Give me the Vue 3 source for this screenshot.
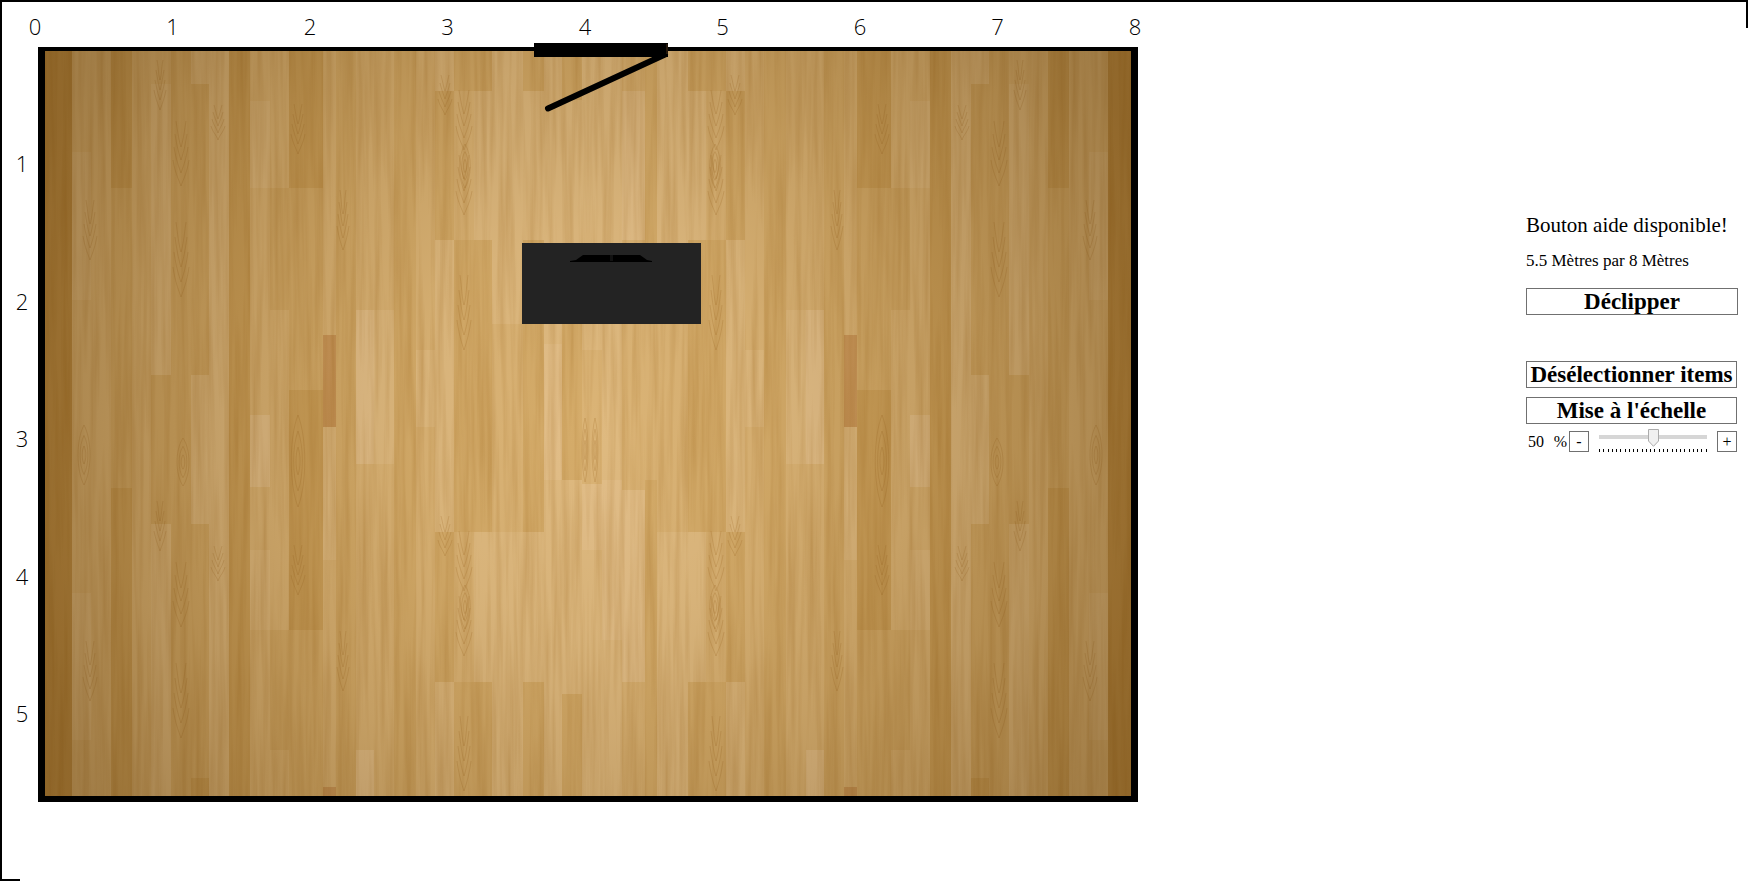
<script setup>
import { ref } from 'vue'

const scale = ref(50)
const metresX = [0, 1, 2, 3, 4, 5, 6, 7, 8]
const metresY = [1, 2, 3, 4, 5]
const ticks = Array.from({ length: 26 }, (_, i) => i)

const TOP = 47
const BOTTOM = 802
const PERIOD = 441

const tone = { l: '#dfba80', h: '#e2be88', m: '#dbb476', d: '#d5ac6a', e: '#cda15b', r: '#ca975a' }

// Each board: left edge, right edge, base tone, then inserts [top, bottom, tone].
const sideBoards = [
  [45, 72, 'e'],
  [72, 91, 'm', [152, 300, 'l'], [593, 740, 'l']],
  [91, 111, 'm'],
  [111, 132, 'e', [188, 488, 'd']],
  [132, 151, 'm'],
  [151, 171, 'm', [84, 375, 'l'], [375, 524, 'd'], [524, 796, 'l']],
  [171, 191, 'd'],
  [191, 209, 'l', [84, 375, 'd'], [524, 778, 'd'], [778, 796, 'e']],
  [209, 229, 'l'],
  [229, 250, 'e'],
  [250, 270, 'm', [101, 188, 'l'], [415, 487, 'h'], [550, 630, 'l']],
  [270, 289, 'm', [188, 310, 'd'], [630, 750, 'd']],
  [289, 323, 'd', [51, 188, 'e'], [390, 630, 'e']],
  [323, 336, 'm', [335, 427, 'r'], [427, 560, 'l'], [787, 796, 'r']],
  [336, 356, 'd'],
  [356, 374, 'm', [310, 464, 'h'], [750, 796, 'h']],
  [374, 394, 'm', [310, 464, 'l']],
  [394, 416, 'd'],
  [416, 435, 'm', [350, 427, 'l'], [427, 532, 'm']],
  [435, 454, 'l', [91, 240, 'd'], [532, 682, 'd']],
  [454, 474, 'd', [91, 240, 'm'], [532, 682, 'm']],
  [474, 492, 'd', [91, 240, 'l'], [532, 682, 'l']],
  [492, 523, 'l', [324, 532, 'm']]
]
const centreBoards = [
  [523, 544, 'd', [91, 240, 'l'], [532, 682, 'l']],
  [544, 562, 'l', [344, 480, 'h']],
  [562, 582, 'd', [100, 243, 'l'], [480, 694, 'l']],
  [582, 602, 'l', [350, 484, 'm'], [484, 550, 'h']],
  [602, 622, 'l', [480, 640, 'h']],
  [622, 645, 'm', [91, 240, 'h'], [490, 682, 'h']],
  [645, 657, 'd', [324, 480, 'm']]
]

function pieces(board, flip) {
  const [a, b, base, ...inserts] = board
  const x = flip ? 1180 - b : a
  return [[TOP, BOTTOM, base], ...inserts].map(([y1, y2, t]) => ({
    x, y: y1, w: b - a, h: y2 - y1, fill: tone[t]
  }))
}
const boards = [
  ...sideBoards.flatMap(b => pieces(b, false)),
  ...centreBoards.flatMap(b => pieces(b, false)),
  ...sideBoards.flatMap(b => pieces(b, true))
]

// Pointed growth rings: centre x, tip y, half width, height of each nest.
const archSeeds = [
  [181, 186, 8, 26], [181, 297, 8, 30], [464, 150, 8, 24], [464, 215, 8, 24],
  [298, 154, 7, 20], [464, 350, 7, 30], [218, 140, 7, 14], [90, 260, 7, 24],
  [445, 115, 7, 16], [343, 250, 6, 24], [160, 110, 6, 20]
]
function arch([x, y, w, h]) {
  return [0, 1, 2, 3].map(i => {
    const t = y - i * h / 2
    const s = w - i
    return `M${x - s} ${t - h} C${x - s + 2} ${t - h / 2} ${x - 2} ${t - 6} ${x} ${t} C${x + 2} ${t - 6} ${x + s - 2} ${t - h / 2} ${x + s} ${t - h}`
  }).join(' ')
}
const ringSeeds = [[298, 461, 9, 46], [183, 462, 8, 24], [465, 166, 7, 22], [465, 607, 7, 22], [84, 455, 8, 30], [595, 450, 4, 32]]
function ring([x, y, w, h]) {
  return [1, 0.65, 0.3].map(k => {
    const a = w * k
    const b = h * k
    return `M${x} ${y - b} C${x + a} ${y - b / 2} ${x + a} ${y + b / 2} ${x} ${y + b} C${x - a} ${y + b / 2} ${x - a} ${y - b / 2} ${x} ${y - b}`
  }).join(' ')
}
const archPath = archSeeds.flatMap(s => [s, [s[0], s[1] + PERIOD, s[2], s[3]]]).map(arch).join(' ')
const ringPath = ringSeeds.map(ring).join(' ')

function step(delta) {
  scale.value = Math.min(100, Math.max(0, Number(scale.value) + delta))
}
</script>

<template>
  <main class="page">
    <section class="plan" aria-label="Plan de la pièce">
      <div class="axis-x">
        <span v-for="n in metresX" :key="n" class="mark">{{ n }}</span>
      </div>
      <div class="axis-y">
        <span v-for="n in metresY" :key="n" class="mark">{{ n }}</span>
      </div>
      <svg class="room" viewBox="38 47 1100 755" role="img" aria-label="Pièce avec porte et bureau">
        <defs>
          <filter id="grain" x="0" y="0" width="100%" height="100%" color-interpolation-filters="sRGB">
            <feTurbulence type="fractalNoise" baseFrequency="0.16 0.006" numOctaves="3" seed="7" />
            <feColorMatrix values="0 0 0 0 0.6  0 0 0 0 0.38  0 0 0 0 0.08  0.45 0 0 0 -0.16" />
          </filter>
          <radialGradient id="shade" gradientUnits="userSpaceOnUse" cx="590" cy="425" r="600" gradientTransform="translate(0 -40) scale(1 1.1)">
            <stop offset="0" stop-color="#4c2c00" stop-opacity="0" />
            <stop offset="0.3" stop-color="#4c2c00" stop-opacity="0.05" />
            <stop offset="0.55" stop-color="#4c2c00" stop-opacity="0.15" />
            <stop offset="0.8" stop-color="#4c2c00" stop-opacity="0.28" />
            <stop offset="1" stop-color="#4c2c00" stop-opacity="0.4" />
          </radialGradient>
        </defs>
        <rect v-for="(b, i) in boards" :key="i" :x="b.x" :y="b.y" :width="b.w" :height="b.h" :fill="b.fill" />
        <g fill="none" stroke="#9c6620" stroke-opacity="0.22">
          <path :d="archPath" />
          <path :d="ringPath" />
          <g transform="translate(1180 0) scale(-1 1)">
            <path :d="archPath" />
            <path :d="ringPath" />
          </g>
        </g>
        <rect x="38" y="47" width="550" height="755" filter="url(#grain)" />
        <g transform="translate(1176 0) scale(-1 1)">
          <rect x="38" y="47" width="550" height="755" filter="url(#grain)" />
        </g>
        <rect x="45" y="51" width="27" height="745" fill="#8a5200" fill-opacity="0.2" />
        <rect x="1108" y="51" width="23" height="745" fill="#8a5200" fill-opacity="0.2" />
        <rect x="38" y="47" width="1100" height="755" fill="url(#shade)" />
        <path d="M38 47H1138V802H38ZM45 51V796H1131V51Z" fill="#000" fill-rule="evenodd" />
        <rect x="534" y="43" width="134" height="14" fill="#000" />
        <path d="M548 108.500L665 54.500" stroke="#000" stroke-width="6" stroke-linecap="round" />
        <path d="M667 44V54" stroke="#4a3018" />
        <rect x="522" y="243" width="179" height="81" fill="#232323" />
        <path d="M570 262V261L576 260L583 255H640L647 260L652 261V262Z" fill="#000" />
        <rect x="610" y="255" width="3" height="6" fill="#111" />
      </svg>
    </section>

    <aside class="tools">
      <p class="help">Bouton aide disponible!</p>
      <p class="size">5.5 Mètres par 8 Mètres</p>
      <button type="button" class="wide clip">Déclipper</button>
      <button type="button" class="wide">Désélectionner items</button>
      <button type="button" class="wide">Mise à l'échelle</button>
      <div class="zoom">
        <label class="percent" for="scale"><span>{{ scale }}</span><span>%</span></label>
        <button type="button" class="small" aria-label="Réduire" @click="step(-4)">-</button>
        <div class="slider">
          <input id="scale" v-model="scale" type="range" min="0" max="100">
          <div class="ticks"><i v-for="t in ticks" :key="t"></i></div>
        </div>
        <button type="button" class="small" aria-label="Agrandir" @click="step(4)">+</button>
      </div>
    </aside>
  </main>
</template>

<style>
body { background: #fff; }
</style>

<style scoped>
.page {
  position: relative;
  box-sizing: border-box;
  min-height: 100vh;
  border-top: 2px solid #000;
  border-left: 2px solid #000;
  display: flex;
  justify-content: space-between;
  align-items: flex-start;
  gap: 32px;
  padding-right: 10px;
  color: #000;
  font-family: "Liberation Serif", serif;
}
.page::before,
.page::after {
  content: "";
  position: absolute;
  background: #000;
}
.page::before { top: 0; right: 0; width: 2px; height: 26px; }
.page::after { bottom: 0; left: 0; width: 18px; height: 2px; }

.plan {
  flex: 0 1 1136px;
  min-width: 0;
  display: grid;
  grid-template-columns: 36px minmax(0, 1fr);
  grid-template-rows: 45px auto;
}
.axis-x {
  grid-column: 2;
  display: flex;
  justify-content: space-between;
  align-items: center;
  margin: 2px -9px 0 -15px;
}
.axis-y {
  grid-column: 1;
  display: flex;
  flex-direction: column;
  justify-content: space-between;
  align-items: center;
  padding: 104px 0 77px 4px;
}
.mark {
  width: 24px;
  height: 24px;
  line-height: 24px;
  text-align: center;
  font-family: "Open Sans", sans-serif;
  font-size: 22px;
  font-weight: 300;
}
.room {
  display: block;
  width: 100%;
  height: auto;
  overflow: visible;
}

.tools {
  flex: 0 0 212px;
  display: flex;
  flex-direction: column;
  padding-top: 209px;
}
.tools p { margin: 0; white-space: nowrap; }
.help { font-size: 21px; line-height: 28px; }
.size { padding-top: 10px; font-size: 17px; line-height: 24px; }
button {
  box-sizing: border-box;
  margin: 0;
  padding: 0;
  border: 1px solid #707070;
  border-radius: 0;
  background: #fff;
  color: #000;
  font-family: inherit;
  white-space: nowrap;
}
.wide {
  height: 27px;
  margin: 9px 1px 0 0;
  font-size: 23px;
  font-weight: 700;
  line-height: 26px;
}
.clip { margin: 15px 0 37px; }
.zoom {
  display: flex;
  align-items: flex-start;
  margin: 5px 1px 0 0;
  padding-top: 2px;
}
.percent {
  flex: 0 0 43px;
  box-sizing: border-box;
  display: flex;
  justify-content: space-between;
  padding: 0 2px;
  font-size: 16px;
  line-height: 21px;
}
.small {
  flex: 0 0 20px;
  height: 21px;
  font-size: 16px;
  line-height: 18px;
}
.slider {
  flex: 1;
  min-width: 0;
  margin: 0 10px;
}
.slider input {
  -webkit-appearance: none;
  appearance: none;
  display: block;
  width: 100%;
  height: 18px;
  margin: -2px 0 0;
  background: linear-gradient(#d6d6d6, #d6d6d6) 0 6px / 100% 4px no-repeat;
}
.slider input::-webkit-slider-thumb {
  -webkit-appearance: none;
  width: 11px;
  height: 18px;
  border: 0;
  background: url("data:image/svg+xml,%3Csvg xmlns='http://www.w3.org/2000/svg' width='11' height='18'%3E%3Cpath d='M.5 .5H10.500V12L5.500 17.300L.5 12Z' fill='%23f0f0f0' stroke='%23acacac'/%3E%3C/svg%3E") no-repeat;
}
.ticks {
  display: flex;
  justify-content: space-between;
  margin-top: 2px;
}
.ticks i {
  width: 1px;
  height: 3px;
  background: #000;
}
</style>
